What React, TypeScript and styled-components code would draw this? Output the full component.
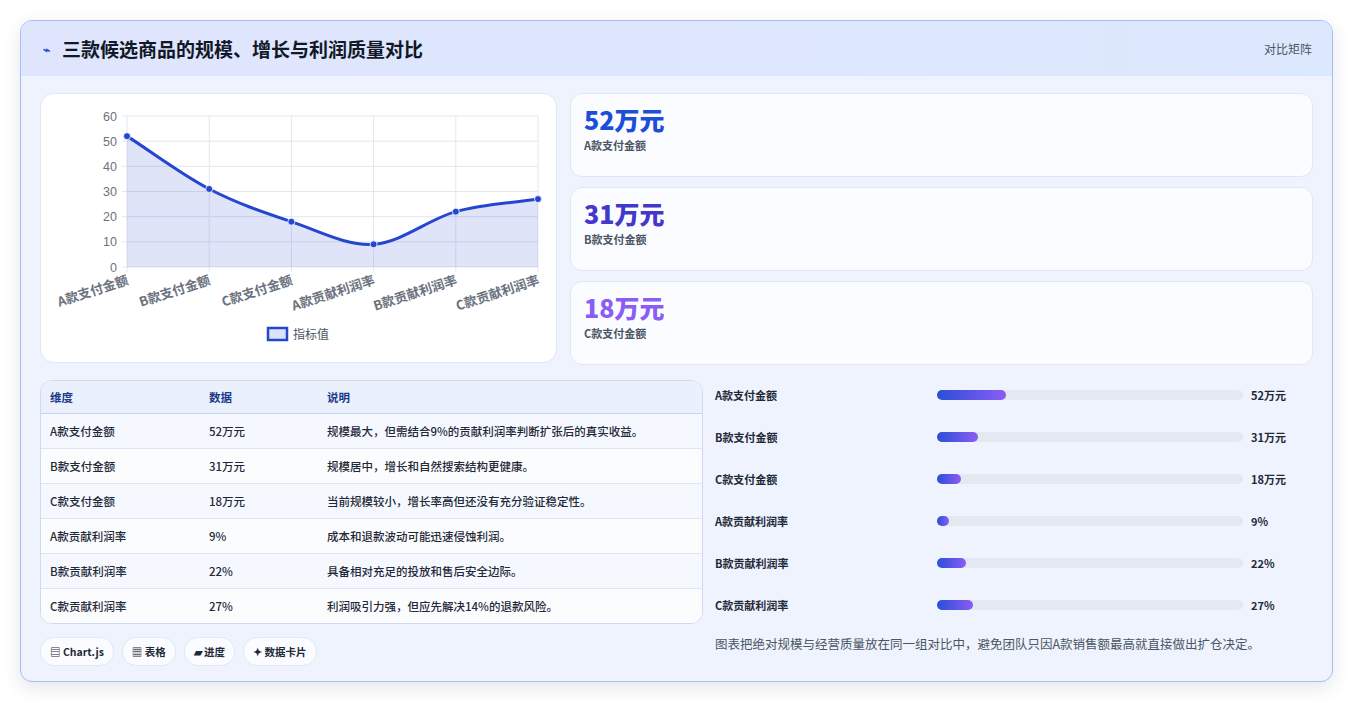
import React from "react";
import styled, { createGlobalStyle } from "styled-components";

const Global = createGlobalStyle`
  body { margin: 0; background: #fff; font-family: "Noto Sans CJK SC", "Noto Sans", sans-serif; color: #1f2937; }
`;

const Page = styled.div`
  padding: 20px 20px 20px 20px;
`;

const Card = styled.section`
  width: 1313px;
  height: 662px;
  box-sizing: border-box;
  border: 1px solid #a9bdf0;
  border-radius: 12px;
  background: #eef3fe;
  overflow: hidden;
  box-shadow: 0 6px 18px rgba(30, 50, 100, 0.12);
`;

const Header = styled.header`
  height: 55px;
  background: linear-gradient(90deg, #dfe5fd, #dce8fd);
  display: flex;
  align-items: center;
  justify-content: space-between;
  padding: 0 20px 0 22px;
`;

const Title = styled.h1`
  margin: 0;
  font-size: 19px;
  font-weight: 700;
  color: #111827;
  display: flex;
  align-items: center;
  gap: 12px;
`;

const Tag = styled.span`
  font-size: 12px;
  color: #4b5563;
`;

const Body = styled.div`
  padding: 17px 19px 0 19px;
  display: grid;
  grid-template-columns: 517px 1fr;
  column-gap: 13px;
`;

const ChartCard = styled.div`
  height: 270px;
  background: #fff;
  border: 1px solid #dfe6f5;
  border-radius: 14px;
  box-sizing: border-box;
`;

const Stats = styled.div`
  display: flex;
  flex-direction: column;
  gap: 10px;
`;

const Stat = styled.div`
  height: 84px;
  box-sizing: border-box;
  background: #fbfcff;
  border: 1px solid #dfe6f5;
  border-radius: 12px;
  padding: 9px 13px;
`;

const StatValue = styled.div<{ $c: string }>`
  font-size: 25px;
  font-weight: 800;
  line-height: 32px;
  color: ${(p) => p.$c};
`;

const StatLabel = styled.div`
  font-size: 11px;
  font-weight: 700;
  color: #4b5563;
  margin-top: 2px;
`;

const Lower = styled.div`
  padding: 15px 19px 0 19px;
  display: grid;
  grid-template-columns: 663px 1fr;
  column-gap: 12px;
`;

const TableWrap = styled.div`
  border: 1px solid #cfdaf0;
  border-radius: 12px;
  overflow: hidden;
  background: #fff;
`;

const Table = styled.table`
  width: 100%;
  border-collapse: collapse;
  font-size: 11.5px;
  font-weight: 500;
  td, th { text-align: left; padding: 0 9px; height: 34px; border-top: 1px solid #dde5f3; }
  th { height: 32px; font-weight: 700; color: #1e3a8a; background: #eaf1fd; border-top: none; border-bottom: 1px solid #c7d5ef; }
  tr:nth-child(odd) td { background: #f5f9ff; }
  tr:nth-child(even) td { background: #fbfcfe; }
`;

const Chips = styled.div`
  display: flex;
  gap: 8px;
  margin-top: 13px;
`;

const Chip = styled.span`
  font-size: 10.5px;
  font-weight: 700;
  padding: 6px 9px;
  border-radius: 14px;
  background: #fbfcff;
  border: 1px solid #e1e7f3;
  color: #1f2937;
`;

const Bars = styled.div`
  display: flex;
  flex-direction: column;
  margin-top: -6px;
`;

const BarRow = styled.div`
  display: grid;
  grid-template-columns: 214px 306px 60px;
  align-items: center;
  column-gap: 8px;
  height: 42px;
  font-size: 11px;
  font-weight: 700;
`;

const Track = styled.div`
  height: 10px;
  border-radius: 5px;
  background: #e3e8f1;
`;

const Fill = styled.div`
  height: 100%;
  border-radius: 5px;
  background: linear-gradient(90deg, #2a4fd6, #8b5cf6);
`;

const Note = styled.p`
  margin: 8px 0 0;
  font-size: 12.5px;
  color: #4b5563;
`;

const labels = ["A款支付金额", "B款支付金额", "C款支付金额", "A款贡献利润率", "B款贡献利润率", "C款贡献利润率"];
const vals = [52, 31, 18, 9, 22, 27];

function LineChart() {
  const L = 86, R = 497, T = 22, B = 173;
  const xs = vals.map((_, i) => L + ((R - L) / 5) * i);
  const ys = vals.map((v) => B - ((B - T) * v) / 60);
  let d = `M${xs[0]},${ys[0]}`;
  for (let i = 1; i < xs.length; i++) {
    const dx = (xs[i] - xs[i - 1]) / 3;
    const m0 = i > 1 ? (ys[i] - ys[i - 2]) / 2 : ys[1] - ys[0];
    const m1 = i < xs.length - 1 ? (ys[i + 1] - ys[i - 1]) / 2 : ys[i] - ys[i - 1];
    d += ` C${xs[i - 1] + dx},${ys[i - 1] + m0 / 3} ${xs[i] - dx},${ys[i] - m1 / 3} ${xs[i]},${ys[i]}`;
  }
  return (
    <svg width="515" height="268" style={{ display: "block" }}>
      {[0, 10, 20, 30, 40, 50, 60].map((t) => {
        const y = B - ((B - T) * t) / 60;
        return (
          <g key={t}>
            <line x1={L - 5} x2={R} y1={y} y2={y} stroke="#e3e7ee" />
            <text x={L - 10} y={y + 4.5} textAnchor="end" fontSize="12.5" fill="#6b7280" fontFamily="Liberation Sans">{t}</text>
          </g>
        );
      })}
      {xs.map((x, i) => (
        <g key={i}>
          <line x1={x} x2={x} y1={T} y2={B + 5} stroke="#e3e7ee" />
          <text transform={`translate(${x + 2},${B + 17}) rotate(-18)`} textAnchor="end" fontSize="13" fontWeight="700" fill="#6b7280" fontFamily="Noto Sans CJK SC">{labels[i]}</text>
        </g>
      ))}
      <path d={`${d} L${R},${B} L${L},${B} Z`} fill="rgba(37,72,210,0.15)" />
      <path d={d} fill="none" stroke="#2547cf" strokeWidth="3" />
      {xs.map((x, i) => <circle key={i} cx={x} cy={ys[i]} r="3.5" fill="#2547cf" stroke="#fff" strokeWidth="0.8" />)}
      <rect x="227" y="234" width="19" height="12" fill="#dbe3fb" stroke="#2547cf" strokeWidth="2.5" />
      <text x="252" y="245" fontSize="12" fill="#4b5563" fontFamily="Noto Sans CJK SC">指标值</text>
    </svg>
  );
}

const rows = [
  ["A款支付金额", "52万元", "规模最大，但需结合9%的贡献利润率判断扩张后的真实收益。"],
  ["B款支付金额", "31万元", "规模居中，增长和自然搜索结构更健康。"],
  ["C款支付金额", "18万元", "当前规模较小，增长率高但还没有充分验证稳定性。"],
  ["A款贡献利润率", "9%", "成本和退款波动可能迅速侵蚀利润。"],
  ["B款贡献利润率", "22%", "具备相对充足的投放和售后安全边际。"],
  ["C款贡献利润率", "27%", "利润吸引力强，但应先解决14%的退款风险。"],
];

const bars: [string, number, string][] = [
  ["A款支付金额", 69, "52万元"],
  ["B款支付金额", 41, "31万元"],
  ["C款支付金额", 24, "18万元"],
  ["A款贡献利润率", 12, "9%"],
  ["B款贡献利润率", 29, "22%"],
  ["C款贡献利润率", 36, "27%"],
];

export default function App() {
  return (
    <Page>
      <Global />
      <Card>
        <Header>
          <Title><span style={{ color: "#2547cf", fontSize: 12 }}>⌁</span>三款候选商品的规模、增长与利润质量对比</Title>
          <Tag>对比矩阵</Tag>
        </Header>
        <Body>
          <ChartCard><LineChart /></ChartCard>
          <Stats>
            <Stat><StatValue $c="#1d4ed8">52万元</StatValue><StatLabel>A款支付金额</StatLabel></Stat>
            <Stat><StatValue $c="#4338ca">31万元</StatValue><StatLabel>B款支付金额</StatLabel></Stat>
            <Stat><StatValue $c="#8b5cf6">18万元</StatValue><StatLabel>C款支付金额</StatLabel></Stat>
          </Stats>
        </Body>
        <Lower>
          <div>
            <TableWrap>
              <Table>
                <thead><tr><th style={{ width: 141 }}>维度</th><th style={{ width: 100 }}>数据</th><th>说明</th></tr></thead>
                <tbody>
                  {rows.map((r) => <tr key={r[0]}>{r.map((c) => <td key={c}>{c}</td>)}</tr>)}
                </tbody>
              </Table>
            </TableWrap>
            <Chips>
              <Chip>▤ Chart.js</Chip><Chip>▦ 表格</Chip><Chip>▰ 进度</Chip><Chip>✦ 数据卡片</Chip>
            </Chips>
          </div>
          <div>
            <Bars>
              {bars.map(([l, w, v]) => (
                <BarRow key={l}>
                  <span>{l}</span>
                  <Track><Fill style={{ width: w }} /></Track>
                  <span>{v}</span>
                </BarRow>
              ))}
            </Bars>
            <Note>图表把绝对规模与经营质量放在同一组对比中，避免团队只因A款销售额最高就直接做出扩仓决定。</Note>
          </div>
        </Lower>
      </Card>
    </Page>
  );
}
